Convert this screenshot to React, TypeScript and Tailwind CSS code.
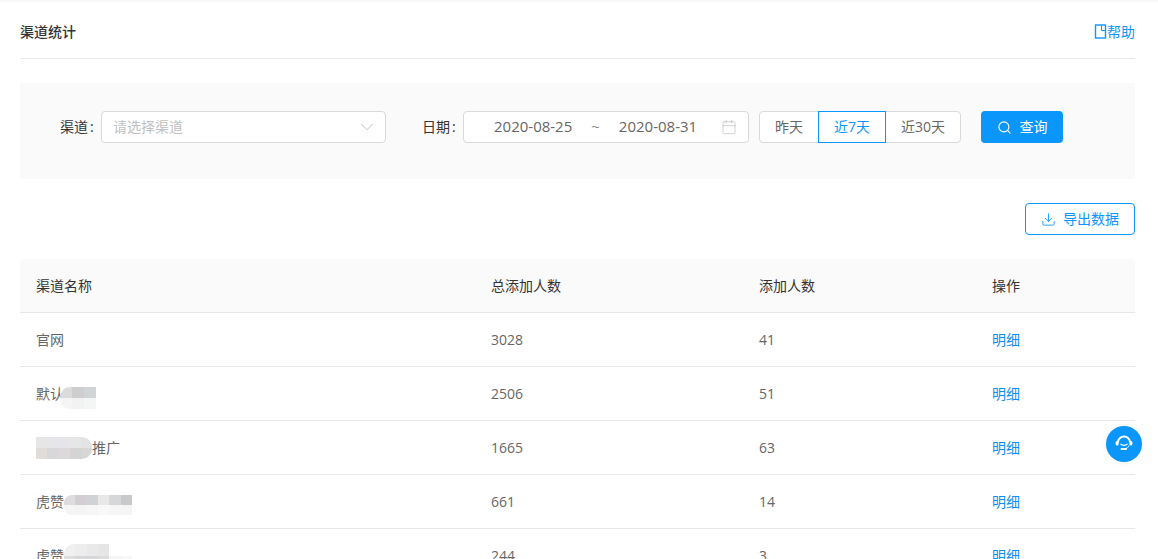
import { Search, ChevronDown, Calendar, Download } from "lucide-react";

type Cell = string;

type Blur = { box: string; rowH: string; rows: Cell[][] };

const rows: { pre: string; post?: string; blur?: Blur; total: number; added: number }[] = [
    { pre: "官网", total: 3028, added: 41 },
    {
        pre: "默认",
        total: 2506,
        added: 51,
        blur: {
            box: "w-[36px] -ml-[4px] mt-2 rounded-l-[10px]",
            rowH: "h-[11px]",
            rows: [["bg-[#dcdbdb]", "bg-[#cfcdce]", "bg-[#d0d4d7]"], ["bg-[#f5f5f5]", "bg-[#f2f2f2]", "bg-[#f4f5f5]"]],
        },
    },
    {
        pre: "",
        post: "推广",
        total: 1665,
        added: 63,
        blur: {
            box: "w-[56px] rounded-r-[10px]",
            rowH: "h-[11px]",
            rows: [["bg-[#e6e6e6]", "bg-[#e6e5e8]", "bg-[#e6e4ea]", "bg-[#e5e6e6]", "bg-[#e3e3e3]"], ["bg-[#dfdcda]", "bg-[#d8d8da]", "bg-[#dcd8dc]", "bg-[#d4d4d4]", "bg-[#d6d6d6]"]],
        },
    },
    {
        pre: "虎赞",
        total: 661,
        added: 14,
        blur: {
            box: "w-[68px] mt-[6px] rounded-l-[8px]",
            rowH: "h-[10px]",
            rows: [["bg-[#dedcde]", "bg-[#d2ced2]", "bg-[#cfd3d6]", "bg-[#e8e8e8]", "bg-[#d6d7d8]", "bg-[#c9c9c9]"], ["bg-[#f5f5f5]", "bg-[#f4f4f4]", "bg-[#f6f6f6]", "bg-[#f9f9f9]", "bg-[#f6f6f6]", "bg-[#f5f5f5]"]],
        },
    },
    {
        pre: "虎赞",
        total: 244,
        added: 3,
        blur: {
            box: "w-[68px] rounded-tl-[10px]",
            rowH: "h-[12px]",
            rows: [["bg-[#f0f0f0]", "bg-[#ededed]", "bg-[#e9e9e9]", "bg-[#e6e6e6]", "bg-[#ffffff]", "bg-[#ffffff]"], ["bg-[#dddddd]", "bg-[#d8d8dc]", "bg-[#d6d8d8]", "bg-[#dcdcdc]", "bg-[#f4f4f4]", "bg-[#f8f8f8]"]],
        },
    },
];

const gridCols = "grid grid-cols-[455px_268px_233px_159px]";

function Mosaic({ blur }: { blur: Blur }) {
    return (
        <div className={`${blur.box} flex shrink-0 flex-col overflow-hidden`}>
            {blur.rows.map((line, i) => (
                <div key={i} className={`${blur.rowH} flex`}>
                    {line.map((c, j) => (
                        <div key={j} className={`${c} h-full flex-1`} />
                    ))}
                </div>
            ))}
        </div>
    );
}

function FieldLabel({ text }: { text: string }) {
    return (
        <span className="flex h-8 w-[41px] items-center text-[#333]">
            {text}
            <span className="ml-[2px]">:</span>
        </span>
    );
}

export default function App() {
    return (
        <div className="relative h-[559px] w-[1158px] overflow-hidden bg-white pl-[20px] pr-[23px] font-['Open_Sans','Noto_Sans_CJK_SC',sans-serif] text-sm text-[#666]">
            <div className="absolute left-0 right-0 top-0 h-[2px] bg-[#f8f8f8]" />

            <div className="flex h-[59px] items-center justify-between border-b border-[#e8e8e8] pt-[5px]">
                <h1 className="font-medium text-[#333]">渠道统计</h1>
                <a className="flex items-center text-[#0c96f5]">
                    <svg width="13" height="15" viewBox="0 0 13 15" fill="none" stroke="#0a96fa" strokeWidth="1.4">
                        <rect x="1.5" y="1" width="10" height="13" />
                        <path d="M7.5 1v5.5h4" strokeWidth="1" />
                    </svg>
                    <span>帮助</span>
                </a>
            </div>

            <div className="mt-6 flex h-24 items-start bg-[#fafafa] pl-10 pt-7">
                <FieldLabel text="渠道" />
                <div className="flex h-8 w-[285px] items-center justify-between rounded border border-[#d9d9d9] bg-white pl-[11px] pr-[7px] text-[#bfbfbf]">
                    <span>请选择渠道</span>
                    <ChevronDown size={22} strokeWidth={0.8} className="text-[#aaa]" />
                </div>

                <div className="ml-9">
                    <FieldLabel text="日期" />
                </div>
                <div className="flex h-8 w-[286px] items-center rounded border border-[#d9d9d9] bg-white pl-[30px] pr-[11px] text-[15px] text-[#666]">
                    <span>2020-08-25</span>
                    <span className="ml-[19px] text-[#888]">~</span>
                    <span className="ml-[19px]">2020-08-31</span>
                    <Calendar size={16} strokeWidth={1} className="ml-auto text-[#bbb]" />
                </div>

                <div className="ml-[10px] flex h-8 items-stretch">
                    <div className="flex w-[60px] items-center justify-center rounded-l border border-[#d9d9d9] bg-white">昨天</div>
                    <div className="z-10 -ml-px flex w-[68px] items-center justify-center border border-[#0a96fa] bg-white text-[#0a96fa]">近7天</div>
                    <div className="-ml-px flex w-[76px] items-center justify-center rounded-r border border-[#d9d9d9] bg-white">近30天</div>
                </div>

                <button className="ml-5 flex h-8 w-[82px] items-center justify-center gap-2 rounded bg-[#0a96fa] text-white">
                    <Search size={15} strokeWidth={1.8} />
                    <span>查询</span>
                </button>
            </div>

            <div className="mt-6 flex justify-end">
                <button className="flex h-8 w-[110px] items-center justify-center gap-[7px] rounded border border-[#0a96fa] bg-white text-[#0a96fa]">
                    <Download size={15} strokeWidth={1.4} />
                    <span>导出数据</span>
                </button>
            </div>

            <div className="mt-6">
                <div className={`${gridCols} h-[54px] items-center rounded-t border-b border-[#e8e8e8] bg-[#fafafa] text-[#333]`}>
                    <div className="pl-4">渠道名称</div>
                    <div className="pl-4">总添加人数</div>
                    <div className="pl-4">添加人数</div>
                    <div className="pl-4">操作</div>
                </div>
                {rows.map((r, i) => (
                    <div key={i} className={`${gridCols} h-[54px] items-center border-b border-[#e8e8e8]`}>
                        <div className="flex items-center pl-4">
                            {r.pre && <span className="w-[28px] shrink-0 text-[#666]">{r.pre}</span>}
                            {r.blur && <Mosaic blur={r.blur} />}
                            {r.post && <span className="text-[#666]">{r.post}</span>}
                        </div>
                        <div className="pl-4">{r.total}</div>
                        <div className="pl-4">{r.added}</div>
                        <div className="pl-4 text-[#0a8ef0]">明细</div>
                    </div>
                ))}
            </div>

            <div className="absolute left-[1106px] top-[426px] flex h-9 w-9 items-center justify-center rounded-full bg-[#0a96fa] shadow-[0_0_8px_rgba(0,0,0,0.06)]">
                <svg width="22" height="20" viewBox="0 0 22 20" fill="none" stroke="white">
                    <path d="M5 8.5a6 6 0 0 1 12 0" strokeWidth="2" />
                    <path d="M7.5 9.8c1.8 2 5.2 2 7 0" strokeWidth="1.2" />
                    <rect x="2.6" y="7" width="3" height="4.4" rx="1.5" fill="white" stroke="none" />
                    <rect x="16.4" y="7" width="3" height="4.4" rx="1.5" fill="white" stroke="none" />
                    <path d="M16 11.5c-.6 1.8-2 2.8-3.5 3" strokeWidth="1" />
                    <rect x="7.5" y="14" width="6.5" height="2" rx="1" fill="white" stroke="none" />
                </svg>
            </div>
        </div>
    );
}
